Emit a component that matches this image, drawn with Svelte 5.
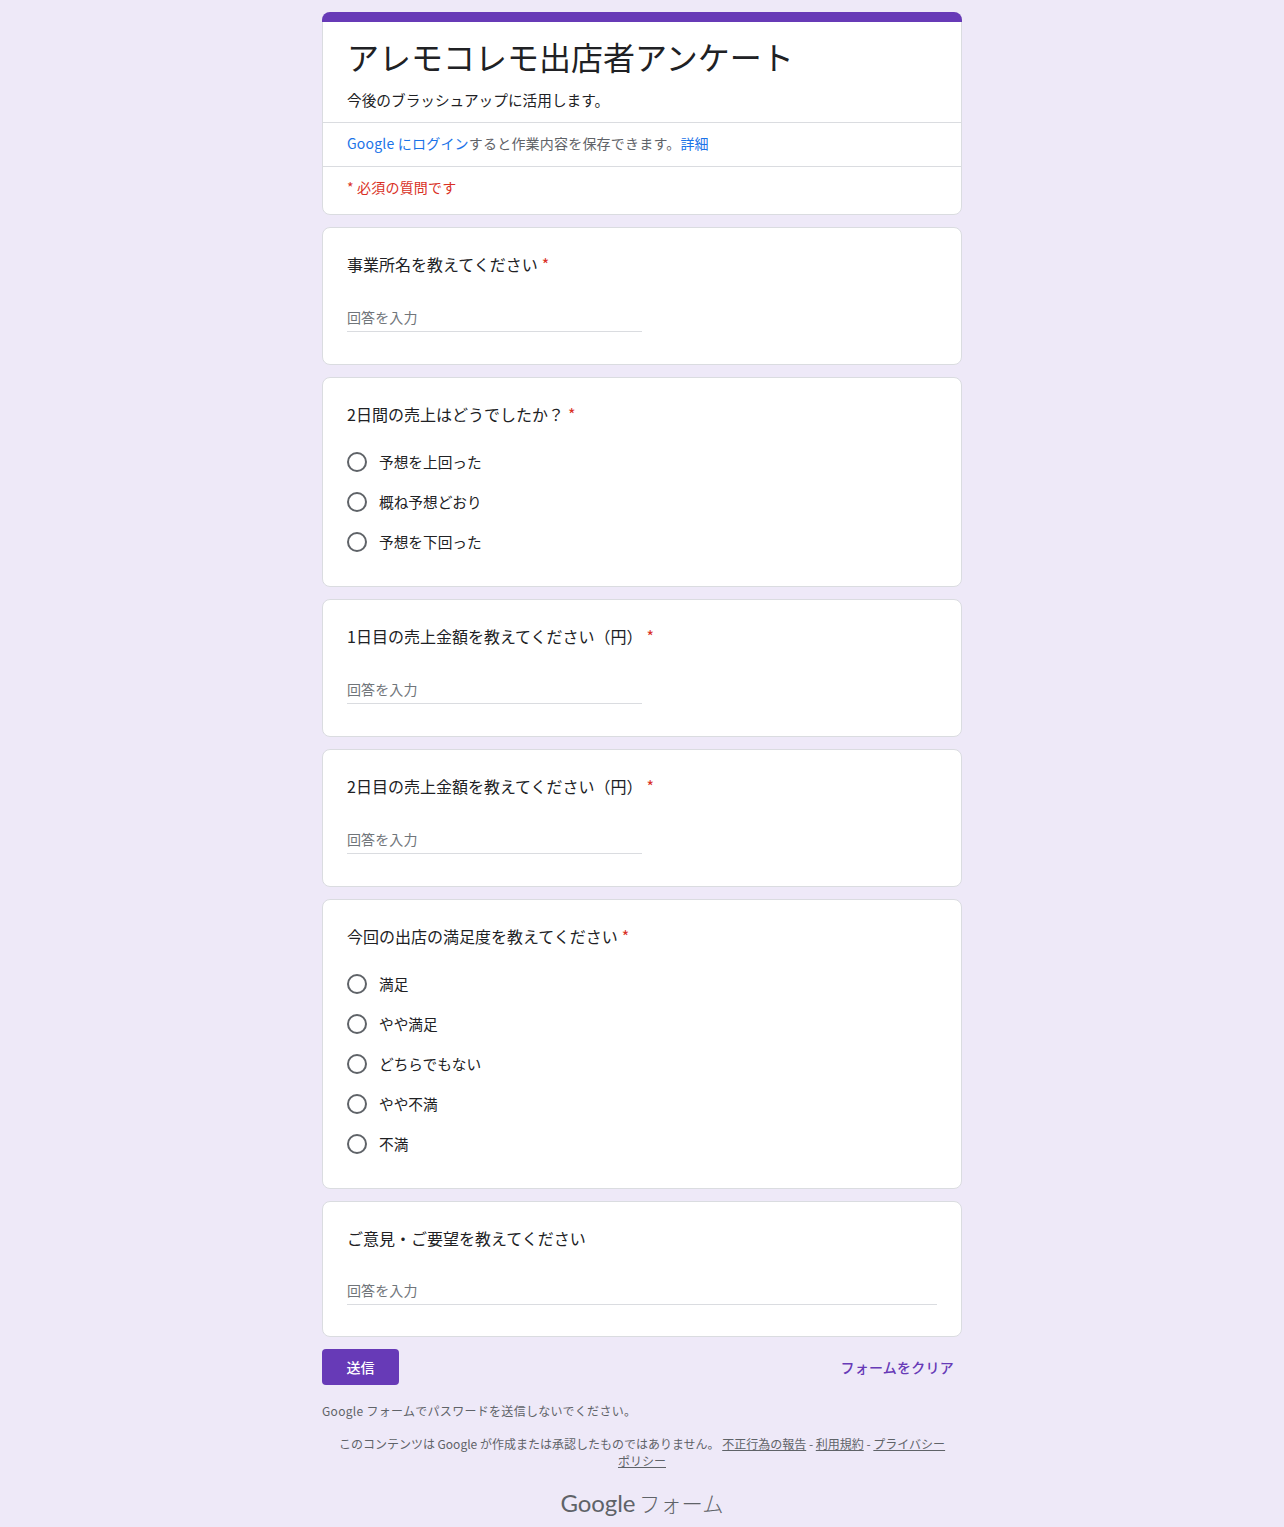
<script>
  const questions = [
    { title: '事業所名を教えてください', required: true, kind: 'text' },
    {
      title: '2日間の売上はどうでしたか？',
      required: true,
      kind: 'radio',
      options: ['予想を上回った', '概ね予想どおり', '予想を下回った']
    },
    { title: '1日目の売上金額を教えてください（円）', required: true, kind: 'text' },
    { title: '2日目の売上金額を教えてください（円）', required: true, kind: 'text' },
    {
      title: '今回の出店の満足度を教えてください',
      required: true,
      kind: 'radio',
      options: ['満足', 'やや満足', 'どちらでもない', 'やや不満', '不満']
    },
    { title: 'ご意見・ご要望を教えてください', required: false, kind: 'long' }
  ];
</script>

<div class="page">
  <header class="card head">
    <div class="accent"></div>
    <div class="intro">
      <h1>アレモコレモ出店者アンケート</h1>
      <p>今後のブラッシュアップに活用します。</p>
    </div>
    <div class="login">
      <a href="#login">Google にログイン</a>すると作業内容を保存できます。<a href="#more">詳細</a>
    </div>
    <div class="must">* 必須の質問です</div>
  </header>

  {#each questions as q}
    <section class="card question">
      <div class="title">
        {q.title}{#if q.required}<span class="star">*</span>{/if}
      </div>
      {#if q.kind === 'radio'}
        <div class="options">
          {#each q.options as option}
            <div class="option">
              <span class="ring"></span>
              <span class="label">{option}</span>
            </div>
          {/each}
        </div>
      {:else}
        <div class="answer" class:long={q.kind === 'long'}>回答を入力</div>
      {/if}
    </section>
  {/each}

  <div class="actions">
    <button class="submit">送信</button>
    <button class="clear">フォームをクリア</button>
  </div>

  <p class="warn">Google フォームでパスワードを送信しないでください。</p>
  <p class="legal">
    このコンテンツは Google が作成または承認したものではありません。 <a href="#abuse">不正行為の報告</a> - <a href="#terms">利用規約</a> - <a href="#privacy">プライバシー<br />ポリシー</a>
  </p>
  <div class="brand"><span class="word">Google</span> <span class="forms">フォーム</span></div>
</div>

<style>
  :global(body) {
    background: #eee9f8;
    font-family: "Noto Sans CJK JP", "Noto Sans", sans-serif;
    color: #202124;
  }

  .page {
    width: 640px;
    margin: 0 auto;
    padding-top: 12px;
    display: flex;
    flex-direction: column;
    box-sizing: border-box;
    height: 1527px;
    overflow: hidden;
  }

  .card {
    background: #fff;
    border: 1px solid #dadce0;
    border-radius: 8px;
    box-sizing: border-box;
    margin-bottom: 12px;
  }

  .head {
    height: 203px;
  }

  .accent {
    height: 10px;
    background: #673ab7;
    margin: -1px -1px 0;
    border-radius: 8px 8px 0 0;
  }

  .intro {
    height: 100px;
    padding: 0 24px;
    border-bottom: 1px solid #dadce0;
  }

  h1 {
    margin: 0;
    padding-top: 10px;
    font-size: 32px;
    font-weight: 400;
    line-height: 48px;
  }

  .intro p {
    margin: 8px 0 0;
    font-size: 14.67px;
    line-height: 24px;
  }

  .login {
    height: 43px;
    padding: 0 24px;
    font-size: 14px;
    line-height: 41px;
    letter-spacing: 0.2px;
    color: #5f6368;
    border-bottom: 1px solid #dadce0;
  }

  .login a {
    color: #1a73e8;
    text-decoration: none;
  }

  .must {
    padding: 0 24px;
    font-size: 14px;
    line-height: 41px;
    letter-spacing: 0.2px;
    color: #d93025;
  }

  .question {
    padding: 24px 24px 0;
  }

  .title {
    font-size: 16px;
    line-height: 24px;
  }

  .star {
    color: #d93025;
    margin-left: 4px;
  }

  .answer {
    width: 295px;
    height: 28px;
    margin-top: 28px;
    margin-bottom: 32px;
    font-size: 14px;
    line-height: 26px;
    color: #70757a;
    border-bottom: 1px solid #dadce0;
    letter-spacing: 0.1px;
    box-sizing: border-box;
  }

  .answer.long {
    width: 100%;
    margin-top: 27px;
    margin-bottom: 31px;
  }

  .options {
    margin-top: 16px;
    margin-bottom: 24px;
  }

  .option {
    display: flex;
    align-items: center;
    height: 40px;
    gap: 12px;
    font-size: 14.67px;
  }

  .label {
    padding-bottom: 2px;
  }

  .ring {
    width: 20px;
    height: 20px;
    border: 2px solid #5f6368;
    border-radius: 50%;
    box-sizing: border-box;
  }

  .actions {
    display: flex;
    justify-content: space-between;
    align-items: center;
    height: 36px;
  }

  button {
    font-family: inherit;
    font-size: 14px;
    font-weight: 500;
    border: 0;
    border-radius: 4px;
    height: 36px;
  }

  .submit {
    width: 77px;
    background: #673ab7;
    color: #fff;
  }

  .clear {
    background: none;
    color: #673ab7;
    padding: 0 8px;
    letter-spacing: 0.25px;
  }

  .warn {
    margin: 16px 0 0;
    font-size: 12px;
    line-height: 20px;
    color: #5f6368;
    letter-spacing: 0.3px;
  }

  .legal {
    margin: 14px 0 0;
    font-size: 12px;
    line-height: 17px;
    color: #5f6368;
    text-align: center;
  }

  .legal a {
    color: #5f6368;
  }

  .brand {
    margin-top: 18px;
    text-align: center;
    color: #5f6368;
    line-height: 32px;
  }

  .word {
    font-family: Lato, sans-serif;
    font-size: 24px;
    letter-spacing: -0.1px;
  }

  .forms {
    font-size: 21.3px;
    font-weight: 300;
  }
</style>
